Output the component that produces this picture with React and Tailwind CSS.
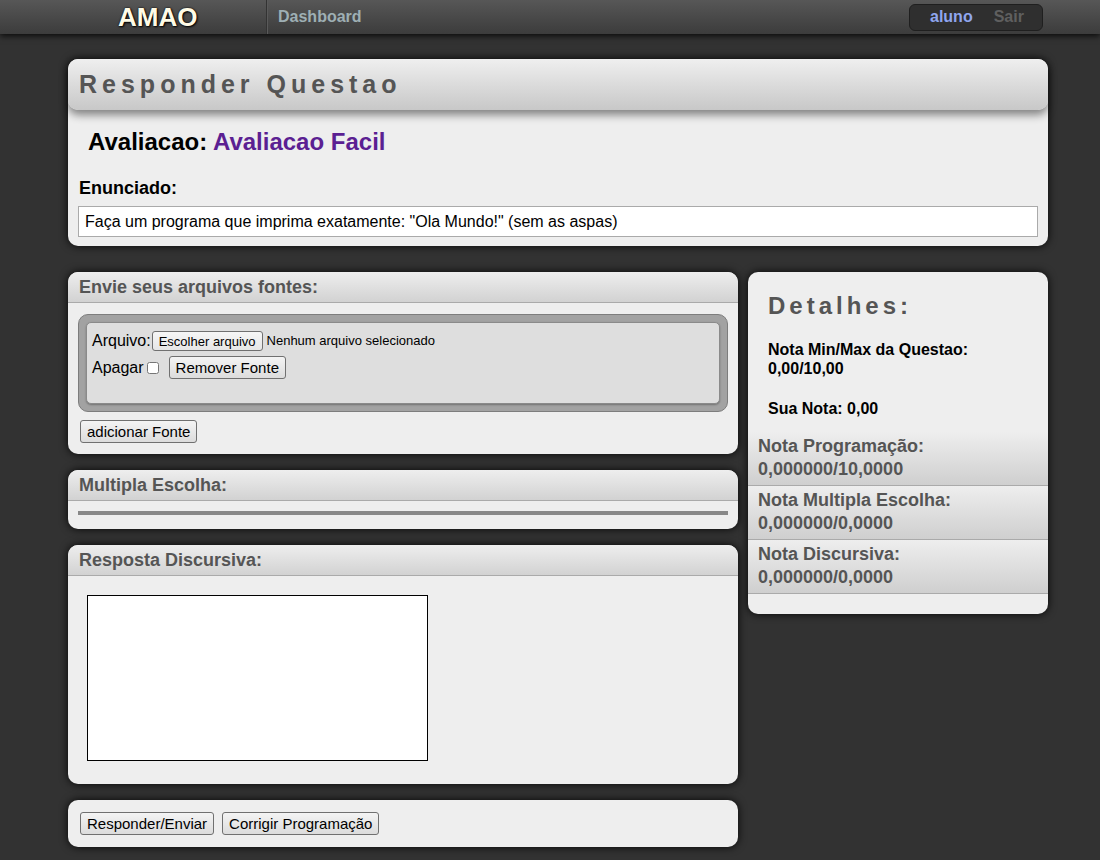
import { useState } from 'react';

const font = { fontFamily: '"Liberation Sans", Arial, sans-serif' };

const btn =
  'inline-flex items-center rounded-[3px] border border-[#707070] bg-gradient-to-b from-[#f4f4f4] to-[#dcdcdc] px-[6px] text-black leading-none';

function CardHeader({ children }) {
  return (
    <div className="h-[31px] rounded-t-[10px] border-b border-[#aaa] bg-gradient-to-b from-[#eee] to-[#d2d2d2] pl-[11px] pt-[5px] text-[18px] font-bold leading-[20px] text-[#555]">
      {children}
    </div>
  );
}

function Card({ children, className = '' }) {
  return (
    <div className={`rounded-[10px] bg-[#eee] shadow-[0_0_8px_rgba(0,0,0,0.9)] ${className}`}>
      {children}
    </div>
  );
}

export default function App() {
  const [apagar, setApagar] = useState(false);

  const notas = [
    { label: 'Nota Programação:', value: '0,000000/10,0000' },
    { label: 'Nota Multipla Escolha:', value: '0,000000/0,0000' },
    { label: 'Nota Discursiva:', value: '0,000000/0,0000' },
  ];

  return (
    <div className="min-h-[860px] bg-[#323232] pb-[10px]" style={font}>
      {/* navbar */}
      <div className="relative z-10 flex h-[34px] items-center bg-gradient-to-b from-[#575757] to-[#3c3c3c] shadow-[0_2px_6px_rgba(0,0,0,0.8)]">
        <div className="flex h-full w-[267px] items-center border-r border-[#333] pl-[118px]">
          <span className="text-[26px] font-bold leading-none text-[#fffbe6] [text-shadow:0_0_2px_#000,1px_1px_2px_#000]">
            AMAO
          </span>
        </div>
        <div className="h-full w-px bg-[#5a5a5a]" />
        <span className="ml-[10px] text-[16px] font-bold text-[#9eafb4]">Dashboard</span>
        <div className="ml-auto mr-[57px] flex h-[27px] w-[134px] items-center rounded-[6px] border border-[#1f1f1f] bg-[#2f2f2f] pl-[20px] text-[16px] font-bold">
          <span className="text-[#8fa6ef]">aluno</span>
          <span className="ml-[21px] text-[#5f5f5f]">Sair</span>
        </div>
      </div>

      <div className="ml-[68px] mt-[25px] w-[980px]">
        {/* top card */}
        <Card className="pb-[9px]">
          <div className="h-[51px] rounded-[10px] bg-gradient-to-b from-[#efefef] to-[#c8c8c8] pl-[11px] pt-[10px] shadow-[0_5px_8px_rgba(0,0,0,0.45)]">
            <h1 className="text-[25px] font-bold leading-[30px] tracking-[5px] text-[#555]">
              Responder Questao
            </h1>
          </div>
          <div className="pl-[20px] pt-[18px] text-[24px] font-bold leading-[28px]">
            <span className="text-black">Avaliacao: </span>
            <span className="text-[#5b1f92]">Avaliacao Facil</span>
          </div>
          <div className="mt-[21px] pl-[11px] text-[18px] font-bold leading-[22px] text-black">Enunciado:</div>
          <div className="mx-[10px] mt-[7px] flex h-[31px] items-center border border-[#aaa] bg-white pl-[6px] text-[16px] text-black">
            Faça um programa que imprima exatamente: "Ola Mundo!" (sem as aspas)
          </div>
        </Card>

        <div className="mt-[26px] flex items-start gap-[10px]">
          {/* left column */}
          <div className="flex w-[670px] flex-col gap-[16px]">
            <Card className="pb-[10px]">
              <CardHeader>Envie seus arquivos fontes:</CardHeader>
              <div className="mx-[10px] mt-[11px] rounded-[10px] border border-[#7d7d7d] bg-[#a2a2a2] p-[7px]">
                <div className="h-[82px] rounded-[5px] border border-[#8a8a8a] bg-[#dedede] px-[5px] pt-[8px] shadow-[0_1px_2px_rgba(0,0,0,0.3)]">
                  <div className="flex h-[20px] items-center text-[16px] text-black">
                    <span>Arquivo:</span>
                    <span className={`${btn} ml-[1px] h-[20px] rounded-[2px] border-[#999] from-[#f6f6f6] to-[#e6e6e6] text-[13px]`}>
                      Escolher arquivo
                    </span>
                    <span className="ml-[4px] text-[13px]">Nenhum arquivo selecionado</span>
                  </div>
                  <div className="mt-[5px] flex h-[23px] items-center text-[16px] text-black">
                    <span>Apagar</span>
                    <input
                      type="checkbox"
                      checked={apagar}
                      onChange={() => setApagar(!apagar)}
                      className="ml-[3px] h-[12px] w-[12px]"
                    />
                    <button className={`${btn} ml-[10px] h-[23px] text-[15px]`}>Remover Fonte</button>
                  </div>
                </div>
              </div>
              <button className={`${btn} ml-[12px] mt-[8px] h-[23px] text-[15px]`}>adicionar Fonte</button>
            </Card>

            <Card className="pb-[14px]">
              <CardHeader>Multipla Escolha:</CardHeader>
              <div className="mx-[10px] mt-[10px] h-[4px] bg-[#888]" />
            </Card>

            <Card className="pb-[23px]">
              <CardHeader>Resposta Discursiva:</CardHeader>
              <textarea className="ml-[19px] mt-[19px] block h-[166px] w-[341px] resize-none border border-black bg-white" />
            </Card>

            <Card className="px-[12px] py-[12px]">
              <div className="flex gap-[8px]">
                <button className={`${btn} h-[23px] text-[15px]`}>Responder/Enviar</button>
                <button className={`${btn} h-[23px] text-[15px]`}>Corrigir Programação</button>
              </div>
            </Card>
          </div>

          {/* right column */}
          <Card className="w-[300px] pb-[20px]">
            <div className="pl-[20px] pt-[20px] text-[24px] font-bold leading-[28px] tracking-[4px] text-[#555]">
              Detalhes:
            </div>
            <div className="pl-[20px] pt-[20px] text-[16px] font-bold leading-[19px] text-black">
              <div>Nota Min/Max da Questao:</div>
              <div>0,00/10,00</div>
              <div className="mt-[21px]">Sua Nota: 0,00</div>
            </div>
            <div className="mt-[14px]">
              {notas.map((n) => (
                <div
                  key={n.label}
                  className="h-[54px] border-b border-[#aaa] bg-gradient-to-b from-[#eee] to-[#cfcfcf] pl-[10px] pt-[3px] text-[18px] font-bold leading-[23px] text-[#555]"
                >
                  <div>{n.label}</div>
                  <div>{n.value}</div>
                </div>
              ))}
            </div>
          </Card>
        </div>
      </div>
    </div>
  );
}
